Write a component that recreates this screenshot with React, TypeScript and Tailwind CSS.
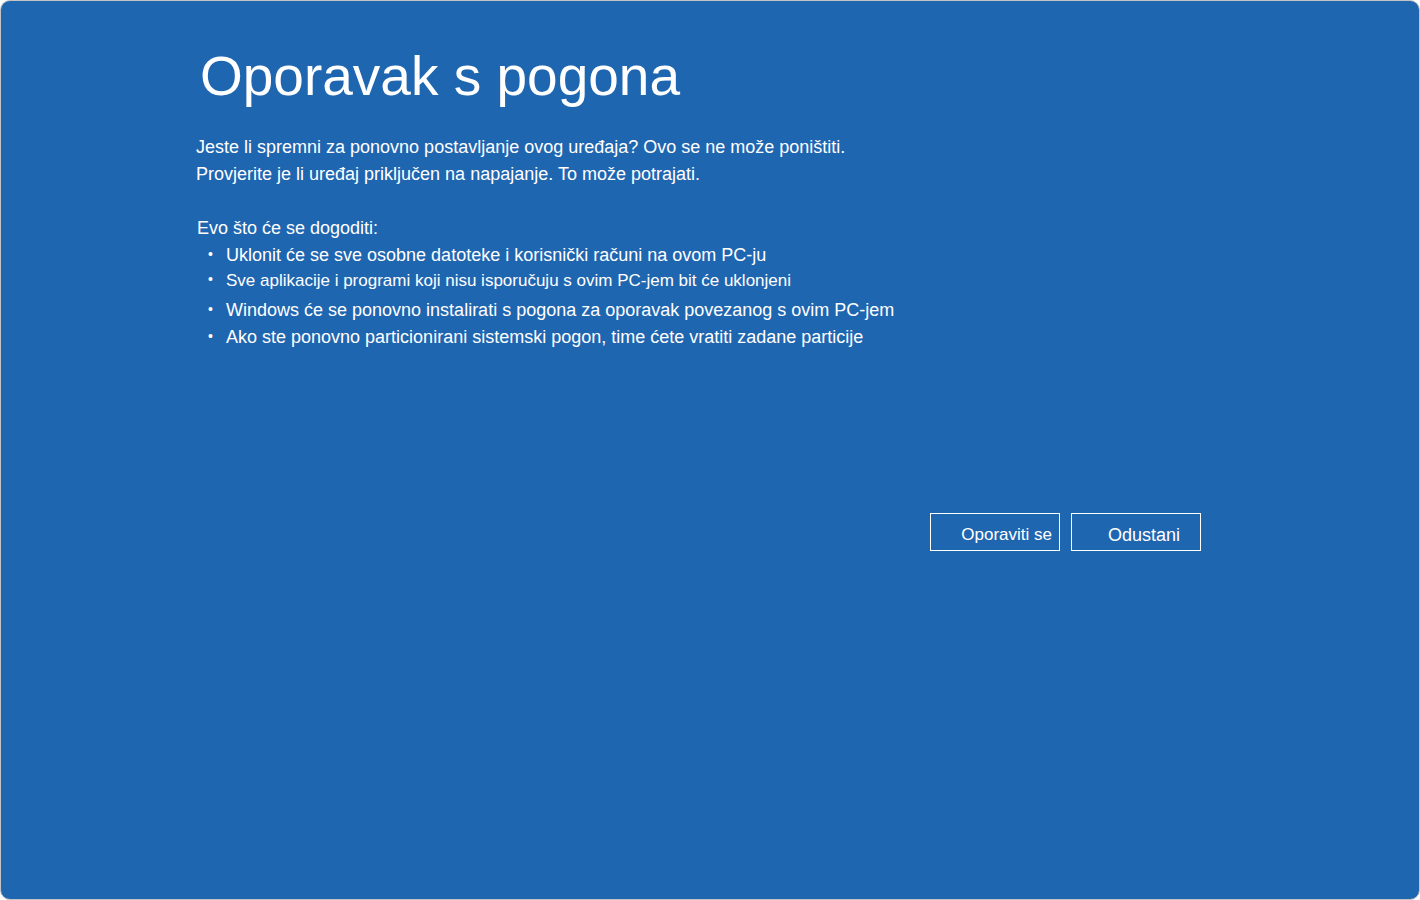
import React from "react";

const bullets = [
  { t: "Uklonit će se sve osobne datoteke i korisnički računi na ovom PC-ju", cls: "mt-0 text-[18px]" },
  { t: "Sve aplikacije i programi koji nisu isporučuju s ovim PC-jem bit će uklonjeni", cls: "mt-[-3px] text-[17px]" },
  { t: "Windows će se ponovno instalirati s pogona za oporavak povezanog s ovim PC-jem", cls: "mt-[2px] text-[18px]" },
  { t: "Ako ste ponovno particionirani sistemski pogon, time ćete vratiti zadane particije", cls: "mt-[-1px] text-[18px]" },
];

export default function App() {
  return (
    <div className="w-[1420px] h-[900px] bg-white" style={{ fontFamily: '"Liberation Sans", Arial, sans-serif' }}>
      <div className="w-[1420px] h-[900px] bg-[#1f66b1] rounded-[10px] border border-[#c4c4c4] text-white relative overflow-hidden">
        <div className="pl-[195px] pt-[48px]">
          <h1 className="text-[55px] leading-[55px] pl-[4px] font-normal">Oporavak s pogona</h1>
          <div className="mt-[30px] text-[18px] leading-[27px]">
            <p>Jeste li spremni za ponovno postavljanje ovog uređaja? Ovo se ne može poništiti.</p>
            <p>Provjerite je li uređaj priključen na napajanje. To može potrajati.</p>
          </div>
          <p className="mt-[27px] text-[18px] leading-[27px] pl-px">Evo što će se dogoditi:</p>
          <ul>
            {bullets.map((b, i) => (
              <li key={i} className={`flex items-baseline leading-[27px] ${b.cls}`}>
                <span className="w-[30px] pl-[12px] text-[14px] relative top-[-2px]">•</span>
                <span>{b.t}</span>
              </li>
            ))}
          </ul>
        </div>
        <div className="absolute left-[929px] top-[512px] flex gap-[11px]">
          <button className="w-[130px] h-[38px] border border-white flex items-center justify-end pr-[7px] pt-[6px] text-[17px]">
            Oporaviti se
          </button>
          <button className="w-[130px] h-[38px] border border-white flex items-center justify-center pl-[16px] pt-[6px] text-[18px] font-medium">
            Odustani
          </button>
        </div>
      </div>
    </div>
  );
}
